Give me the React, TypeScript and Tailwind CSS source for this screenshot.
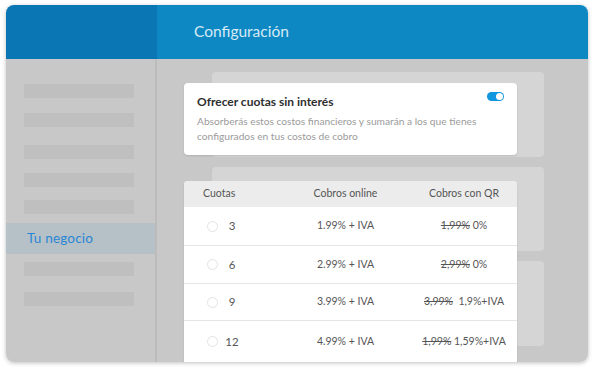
const rows = [
  { n: "3", online: "1.99% + IVA", old: "1,99%", qr: " 0%" },
  { n: "6", online: "2.99% + IVA", old: "2,99%", qr: " 0%" },
  { n: "9", online: "3.99% + IVA", old: "3,99%", qr: "  1,9%+IVA" },
  { n: "12", online: "4.99% + IVA", old: "1,99%", qr: " 1,59%+IVA" },
]

const rowHeights = ["h-[39px]", "h-[38px]", "h-[37px]", "h-[41px]"]

function Toggle() {
  return (
    <div className="w-[17px] h-[9px] rounded-full bg-[#1196e0] flex items-center justify-end pr-[1px]">
      <div className="w-[7px] h-[7px] rounded-full bg-white" />
    </div>
  )
}

function Bar({ className = "" }: { className?: string }) {
  return <div className={`ml-[18px] w-[110px] h-[14px] bg-[#bfbfbf] ${className}`} />
}

export default function App() {
  return (
    <div className="w-[594px] h-[369px] bg-white pt-[5px] pl-[6px] font-['Lato','Open_Sans',sans-serif]">
      <div className="w-[582px] h-[357px] rounded-[8px] overflow-hidden flex flex-col shadow-[0_1px_4px_rgba(0,0,0,0.25)]">
        {/* header */}
        <div className="h-[54px] flex shrink-0">
          <div className="w-[151px] bg-[#0b76b4]" />
          <div className="flex-1 bg-[#0d88c3] flex items-center pl-[37px] pb-[1px]">
            <span className="text-[15.5px] text-[#d6eaf5]">Configuración</span>
          </div>
        </div>

        {/* body */}
        <div className="flex-1 flex bg-[#c8c8c8] min-h-0">
          <div className="w-[151px] border-r-2 border-[#bcbcbc] shrink-0 pt-[25px]">
            <Bar />
            <Bar className="mt-[15px]" />
            <Bar className="mt-[18px]" />
            <Bar className="mt-[14px]" />
            <Bar className="mt-[13px]" />
            <div className="mt-[9px] h-[31px] bg-[#b5c0c7] flex items-center pl-[21px]">
              <span className="text-[13.5px] text-[#2a86d4] tracking-[0.2px]">Tu negocio</span>
            </div>
            <Bar className="mt-[8px]" />
            <Bar className="mt-[16px]" />
          </div>

          <div className="flex-1 grid min-h-0 overflow-hidden">
            {/* placeholder cards behind */}
            <div className="col-start-1 row-start-1 pl-[55px] pt-[13px] flex flex-col gap-[10px]">
              <div className="w-[332px] h-[85px] rounded-[4px] bg-[#d5d5d5]" />
              <div className="w-[332px] h-[84px] rounded-[4px] bg-[#d5d5d5]" />
              <div className="w-[332px] h-[85px] rounded-[4px] bg-[#d5d5d5]" />
            </div>

            {/* foreground content */}
            <div className="col-start-1 row-start-1 pl-[27px] pt-[24px] flex flex-col">
              <div className="w-[333px] h-[72px] bg-white rounded-[4px] shadow-[0_1px_2px_rgba(0,0,0,0.12)] px-[13px] pt-[10px] relative">
                <div className="absolute right-[13px] top-[9px]">
                  <Toggle />
                </div>
                <div className="text-[12px] font-bold text-[#2e2e2e] leading-[17px]">Ofrecer cuotas sin interés</div>
                <div className="mt-[4px] text-[10.2px] text-[#9b9b9b] leading-[15px]">
                  Absorberás estos costos financieros y sumarán a los que tienes
                  <br />
                  configurados en tus costos de cobro
                </div>
              </div>

              <div className="mt-[26px] w-[333px] bg-white rounded-t-[4px] shadow-[0_1px_2px_rgba(0,0,0,0.12)] overflow-hidden">
                <div className="h-[26px] bg-[#ececec] grid grid-cols-[96px_131px_106px] items-center text-[10.5px] text-[#555]">
                  <div className="pl-[19px]">Cuotas</div>
                  <div className="text-center">Cobros online</div>
                  <div className="text-center">Cobros con QR</div>
                </div>
                {rows.map((r, i) => (
                  <div
                    key={r.n}
                    className={`${rowHeights[i]} grid grid-cols-[96px_131px_106px] items-center text-[#555] ${
                      i < rows.length - 1 ? "border-b border-[#e6e6e6]" : ""
                    }`}
                  >
                    <div className="pl-[23px] flex items-center">
                      <div className="w-[11px] h-[11px] rounded-full border border-[#e3e3e3]" />
                      <div className="ml-[6px] w-[16px] text-center text-[11.5px]">{r.n}</div>
                    </div>
                    <div className="text-center text-[10.5px]">{r.online}</div>
                    <div className="text-center text-[10.5px] whitespace-pre">
                      <span className="line-through">{r.old}</span>
                      {r.qr}
                    </div>
                  </div>
                ))}
              </div>
            </div>
          </div>
        </div>
      </div>
    </div>
  )
}
